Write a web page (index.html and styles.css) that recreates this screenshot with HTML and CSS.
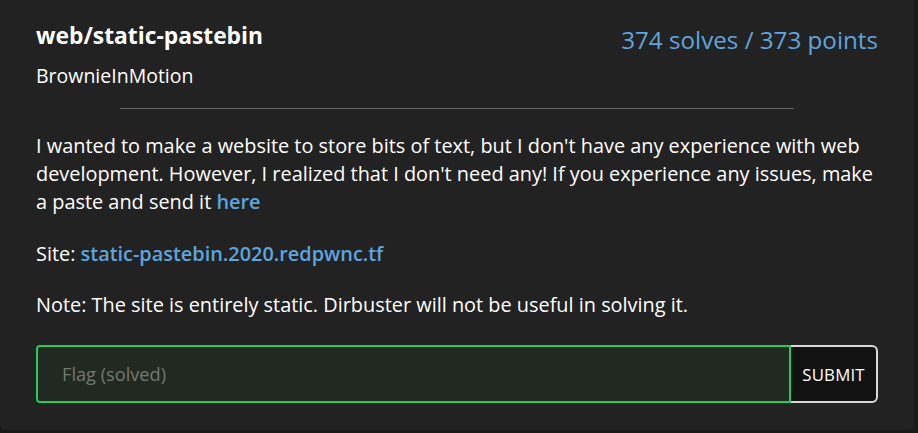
FILE: index.html
```html
<!DOCTYPE html>
<html lang="en">
<head>
<meta charset="utf-8">
<title>web/static-pastebin</title>
<link rel="stylesheet" href="styles.css">
</head>
<body>
<div class="card">
  <div class="header">
    <div class="title-block">
      <h2 class="title">web/static-pastebin</h2>
      <div class="author">BrownieInMotion</div>
    </div>
    <div class="stats">374 solves / 373 points</div>
  </div>
  <hr class="divider">
  <div class="description">
    <p>I wanted to make a website to store bits of text, but I don't have any experience with web development. However, I realized that I don't need any! If you experience any issues, make a paste and send it <a href="#">here</a></p>
    <p>Site: <a href="#">static-pastebin.2020.redpwnc.tf</a></p>
    <p>Note: The site is entirely static. Dirbuster will not be useful in solving it.</p>
  </div>
  <form class="flag-form">
    <input class="flag-input" type="text" placeholder="Flag (solved)">
    <button class="flag-submit" type="button">SUBMIT</button>
  </form>
</div>
</body>
</html>
```
FILE: styles.css
```css
html, body {
  margin: 0;
  padding: 0;
  background: #1a1a1a;
}
body {
  font-family: "Open Sans", "Noto Sans", sans-serif;
  color: #fff;
  width: 918px;
  height: 433px;
  overflow: hidden;
}
.card {
  box-sizing: border-box;
  width: 914px;
  height: 430px;
  background: #222222;
  border-radius: 0 0 6px 6px;
  padding: 22px 36px 27px;
}
.header {
  display: flex;
  justify-content: space-between;
  align-items: flex-start;
}
.title {
  margin: 0;
  font-size: 22.8px;
  line-height: 28px;
  font-weight: 700;
}
.author {
  margin-top: 13.5px;
  font-size: 19.5px;
  line-height: 24px;
}
.stats {
  margin-top: 4px;
  font-size: 24.2px;
  line-height: 28px;
  color: #5ea5de;
}
.divider {
  width: 80%;
  margin: 20.5px auto 0;
  border: 0;
  height: 1px;
  background: #666;
}
.description {
  padding-top: 23px;
  font-size: 19.9px;
  line-height: 28px;
}
.description p {
  margin: 0 0 23.5px;
}
.description a {
  color: #5ea5de;
  font-weight: 600;
  text-decoration: none;
}
.flag-form {
  display: flex;
  height: 58px;
  margin-top: 26px;
}
.flag-input {
  flex: 1;
  box-sizing: border-box;
  height: 58px;
  margin: 0;
  padding: 0 24px;
  border: 2px solid #22cc5e;
  border-radius: 4px 0 0 4px;
  background: #212a21;
  color: #fff;
  font-family: inherit;
  font-size: 18.2px;
  outline: none;
}
.flag-input::placeholder {
  color: #737873;
}
.flag-submit {
  box-sizing: border-box;
  width: 87px;
  height: 58px;
  margin: 0;
  border: 2px solid #d8d8d8;
  border-left: 0;
  border-radius: 0 6px 6px 0;
  background: #121212;
  color: #fff;
  font-family: inherit;
  font-size: 16.8px;
  letter-spacing: 0.2px;
}
```
